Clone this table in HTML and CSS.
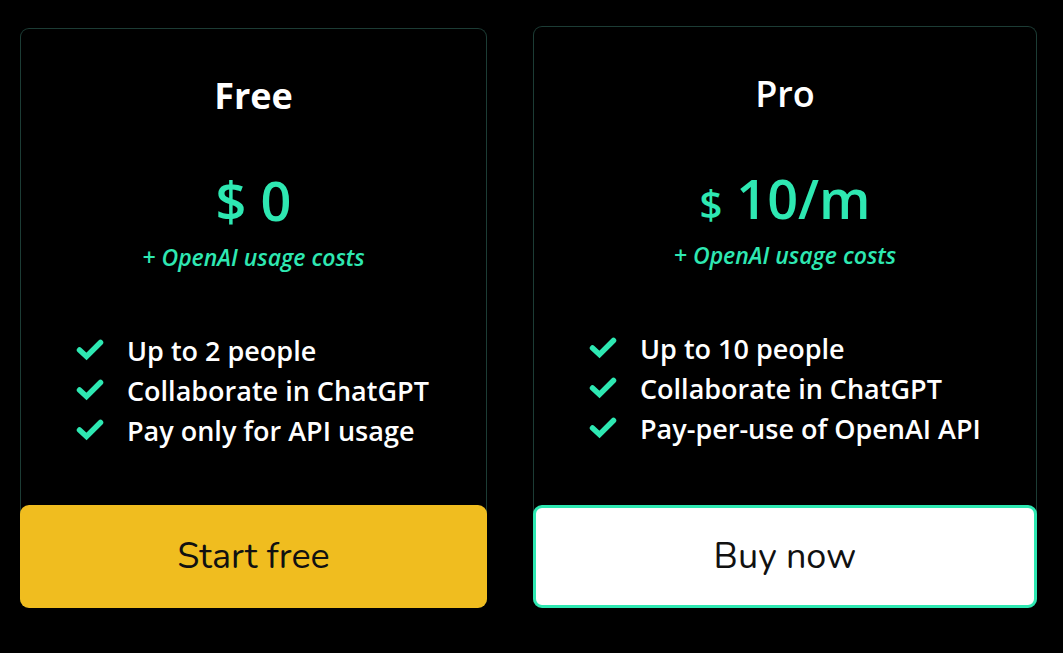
FILE: index.html
```html
<!DOCTYPE html>
<html lang="en">
<head>
<meta charset="utf-8">
<title>Pricing</title>
<link rel="stylesheet" href="styles.css">
</head>
<body>
<main class="plans">
  <section class="card card-free">
    <h2 class="title title-bold">Free</h2>
    <div class="price"><span class="cur">$</span> 0</div>
    <div class="sub">+ OpenAI usage costs</div>
    <ul class="features">
      <li><svg class="check" viewBox="0 0 28 22"><path d="M3.5 11 L10.5 17.5 L24.5 3.5"/></svg>Up to 2 people</li>
      <li><svg class="check" viewBox="0 0 28 22"><path d="M3.5 11 L10.5 17.5 L24.5 3.5"/></svg>Collaborate in ChatGPT</li>
      <li><svg class="check" viewBox="0 0 28 22"><path d="M3.5 11 L10.5 17.5 L24.5 3.5"/></svg>Pay only for API usage</li>
    </ul>
    <a class="btn btn-yellow" href="#">Start free</a>
  </section>
  <section class="card card-pro">
    <h2 class="title">Pro</h2>
    <div class="price"><span class="cur cur-small">$</span> 10/m</div>
    <div class="sub">+ OpenAI usage costs</div>
    <ul class="features">
      <li><svg class="check" viewBox="0 0 28 22"><path d="M3.5 11 L10.5 17.5 L24.5 3.5"/></svg>Up to 10 people</li>
      <li><svg class="check" viewBox="0 0 28 22"><path d="M3.5 11 L10.5 17.5 L24.5 3.5"/></svg>Collaborate in ChatGPT</li>
      <li><svg class="check" viewBox="0 0 28 22"><path d="M3.5 11 L10.5 17.5 L24.5 3.5"/></svg>Pay-per-use of OpenAI API</li>
    </ul>
    <a class="btn btn-white" href="#">Buy now</a>
  </section>
</main>
</body>
</html>
```
FILE: styles.css
```css
html, body {
  margin: 0;
  padding: 0;
  background: #000;
}
body {
  font-family: "Open Sans", "Noto Sans", sans-serif;
  color: #fff;
  width: 1063px;
  height: 653px;
  overflow: hidden;
}
.plans {
  display: flex;
  align-items: stretch;
  gap: 46px;
  padding: 26px 0 0 20px;
}
.card {
  display: flex;
  flex-direction: column;
  align-items: stretch;
  border: 1px solid #1c3c35;
  border-bottom: none;
  border-radius: 9px;
  box-sizing: border-box;
}
.card-free {
  width: 467px;
  margin-top: 2px;
}
.card-pro {
  width: 504px;
}
.title {
  margin: 47px 0 0;
  text-align: center;
  font-size: 36px;
  line-height: 40px;
  font-weight: 600;
}
.title-bold {
  font-weight: 700;
}
.price {
  margin-top: 54px;
  text-align: center;
  font-size: 54px;
  line-height: 60px;
  height: 60px;
  font-weight: 600;
  color: #2ee8b2;
}
.cur-small {
  font-size: 40px;
  line-height: 0;
}
.sub {
  margin-top: 13px;
  text-align: center;
  font-size: 23px;
  line-height: 28px;
  font-style: italic;
  font-weight: 600;
  color: #2ee8b2;
}
.features {
  list-style: none;
  margin: 59px 0 55px;
  padding: 0 0 0 54px;
}
.features li {
  display: flex;
  align-items: center;
  height: 40px;
  font-size: 27px;
  font-weight: 600;
}
.check {
  width: 30px;
  height: 22px;
  margin-right: 22px;
  fill: none;
  stroke: #2ee8b2;
  stroke-width: 5.5;
  stroke-linecap: round;
  stroke-linejoin: miter;
}
.btn {
  display: flex;
  align-items: center;
  justify-content: center;
  margin: auto -1px 0;
  height: 103px;
  flex-shrink: 0;
  box-sizing: border-box;
  border-radius: 9px;
  font-family: "Nunito", "Open Sans", sans-serif;
  font-size: 36px;
  font-weight: 400;
  color: #111;
  text-decoration: none;
}
.btn-yellow {
  background: #f0bd1f;
}
.btn-white {
  background: #fff;
  border: 3px solid #2ee8b2;
}
```
